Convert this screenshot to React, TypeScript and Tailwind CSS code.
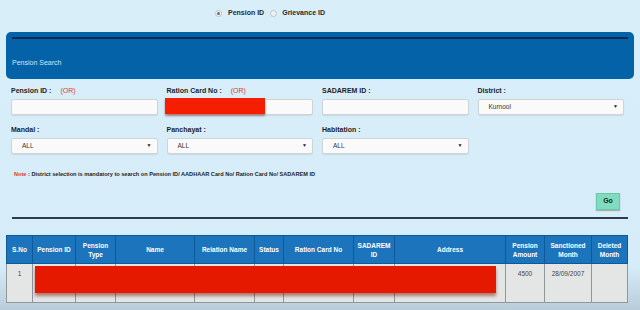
import React from "react";

const Field = ({ label, or, children }: { label: string; or?: boolean; children: React.ReactNode }) => (
  <div className="flex flex-col">
    <div className="h-[10px] flex items-center text-[7px] font-bold text-[#1e1e1e] leading-none">
      <span>{label}</span>
      {or && <span className="ml-[9px] font-normal text-[#e03a2c]">(OR)</span>}
    </div>
    <div className="mt-[4px]">{children}</div>
  </div>
);

const Input = () => (
  <div className="h-[16px] rounded-[2px] border border-[#d0d4d6] bg-[#fafafa] shadow-[0_1px_1px_rgba(0,0,0,0.08)]" />
);

const Select = ({ value }: { value: string }) => (
  <div className="h-[16px] rounded-[2px] border border-[#d0d4d6] bg-[#fafafa] shadow-[0_1px_1px_rgba(0,0,0,0.08)] flex items-center justify-between pl-[10px] pr-[5px] text-[6.5px] text-[#333]">
    <span>{value}</span>
    <span className="text-[5px] text-[#222]">▼</span>
  </div>
);

const cols: { label: string[]; w: number }[] = [
  { label: ["S.No"], w: 26 },
  { label: ["Pension ID"], w: 43 },
  { label: ["Pension", "Type"], w: 40 },
  { label: ["Name"], w: 79 },
  { label: ["Relation Name"], w: 60 },
  { label: ["Status"], w: 29 },
  { label: ["Ration Card No"], w: 70 },
  { label: ["SADAREM", "ID"], w: 41 },
  { label: ["Address"], w: 111 },
  { label: ["Pension", "Amount"], w: 39 },
  { label: ["Sanctioned", "Month"], w: 47 },
  { label: ["Deleted", "Month"], w: 36 },
];

const bodyVals = ["1", "", "", "", "", "", "", "", "", "4500", "28/09/2007", ""];

export default function App() {
  return (
    <div className="relative w-[640px] h-[310px] overflow-hidden bg-[linear-gradient(to_bottom,#d8eef9_0%,#d6ecf8_86%,#b9cdd9_100%)] font-['Liberation_Sans',sans-serif] text-[#222]">
      {/* radio row */}
      <div className="h-[32px] pt-[9px] pl-[215px] flex items-start text-[7px] leading-[8px]">
        <div className="flex items-center">
          <span className="w-[7px] h-[7px] rounded-full border border-[#bfc6ca] bg-[#eef1f2] flex items-center justify-center">
            <span className="w-[3px] h-[3px] rounded-full bg-[#6a6f73]" />
          </span>
          <span className="ml-[6px] font-bold text-[#2a2a2a]">Pension ID</span>
          <span className="ml-[6px] w-[7px] h-[7px] rounded-full border border-[#bfc6ca] bg-[#eef1f2]" />
          <span className="ml-[5px] font-bold text-[#2a2a2a]">Grievance ID</span>
        </div>
      </div>

      {/* header panel */}
      <div className="mx-[6px] h-[47px] rounded-[5px] bg-[#0462a8] px-[6px] pt-[5px]">
        <div className="h-[2px] bg-[#0b2a4c]" />
        <div className="mt-[19px] text-[7px] text-[#d3e6f6] leading-[10px]">Pension Search</div>
      </div>

      {/* form */}
      <div className="grid grid-cols-4 gap-x-[9px] gap-y-[9px] pl-[11px] pr-[16px] pt-[6px]">
        <Field label="Pension ID :" or>
          <Input />
        </Field>
        <Field label="Ration Card No :" or>
          <Input />
        </Field>
        <Field label="SADAREM ID :">
          <Input />
        </Field>
        <Field label="District :">
          <Select value="Kurnool" />
        </Field>
        <Field label="Mandal :">
          <Select value="ALL" />
        </Field>
        <Field label="Panchayat :">
          <Select value="ALL" />
        </Field>
        <Field label="Habitation :">
          <Select value="ALL" />
        </Field>
      </div>

      <div className="mt-[16px] pl-[14px] h-[10px] flex items-center text-[5.6px] font-bold text-[#1e1e1e] leading-none">
        <span className="text-[#e03a2c]">Note</span>
        <span>&nbsp;: District selection is mandatory to search on Pension ID/ AADHAAR Card No/ Ration Card No/ SADAREM ID</span>
      </div>

      <div className="mt-[13px] flex justify-end pr-[20px]">
        <div className="w-[24px] h-[17px] bg-[#7fdcbe] border border-[#6cc7a9] shadow-[0_1px_1px_rgba(0,0,0,0.25)] flex items-center justify-center text-[7px] font-bold text-[#1e1e1e]">
          Go
        </div>
      </div>

      <div className="mt-[7px] mx-[12px] h-[2px] bg-[#2f3d4a]" />

      {/* table */}
      <div className="mt-[16px] ml-[6px]">
        <table className="border-collapse table-fixed w-[621px] border border-[#7f8a92]">
          <colgroup>
            {cols.map((c, i) => (
              <col key={i} style={{ width: c.w }} />
            ))}
          </colgroup>
          <thead>
            <tr className="h-[28px] bg-[#1c74bc]">
              {cols.map((c, i) => (
                <th
                  key={i}
                  className="border border-[#0f5996] text-white text-[6.5px] font-bold leading-[9px] text-center align-middle p-0"
                >
                  {c.label.map((l, j) => (
                    <div key={j}>{l}</div>
                  ))}
                </th>
              ))}
            </tr>
          </thead>
          <tbody>
            <tr className="h-[39px] bg-[#e4e5e5]">
              {bodyVals.map((v, i) => (
                <td
                  key={i}
                  className="border border-[#8f979c] text-[6.5px] text-[#444] text-center align-top pt-[5px] p-0"
                >
                  {v}
                </td>
              ))}
            </tr>
          </tbody>
        </table>
      </div>

      {/* redaction overlays */}
      <div className="absolute left-[165px] top-[98px] w-[100px] h-[16px] bg-[#f51e00] shadow-[0_2px_2px_rgba(120,20,0,0.45)]" />
      <div className="absolute left-[35px] top-[266px] w-[461px] h-[27px] bg-[#e51900] shadow-[0_3px_3px_rgba(120,20,0,0.5)]" />
    </div>
  );
}
